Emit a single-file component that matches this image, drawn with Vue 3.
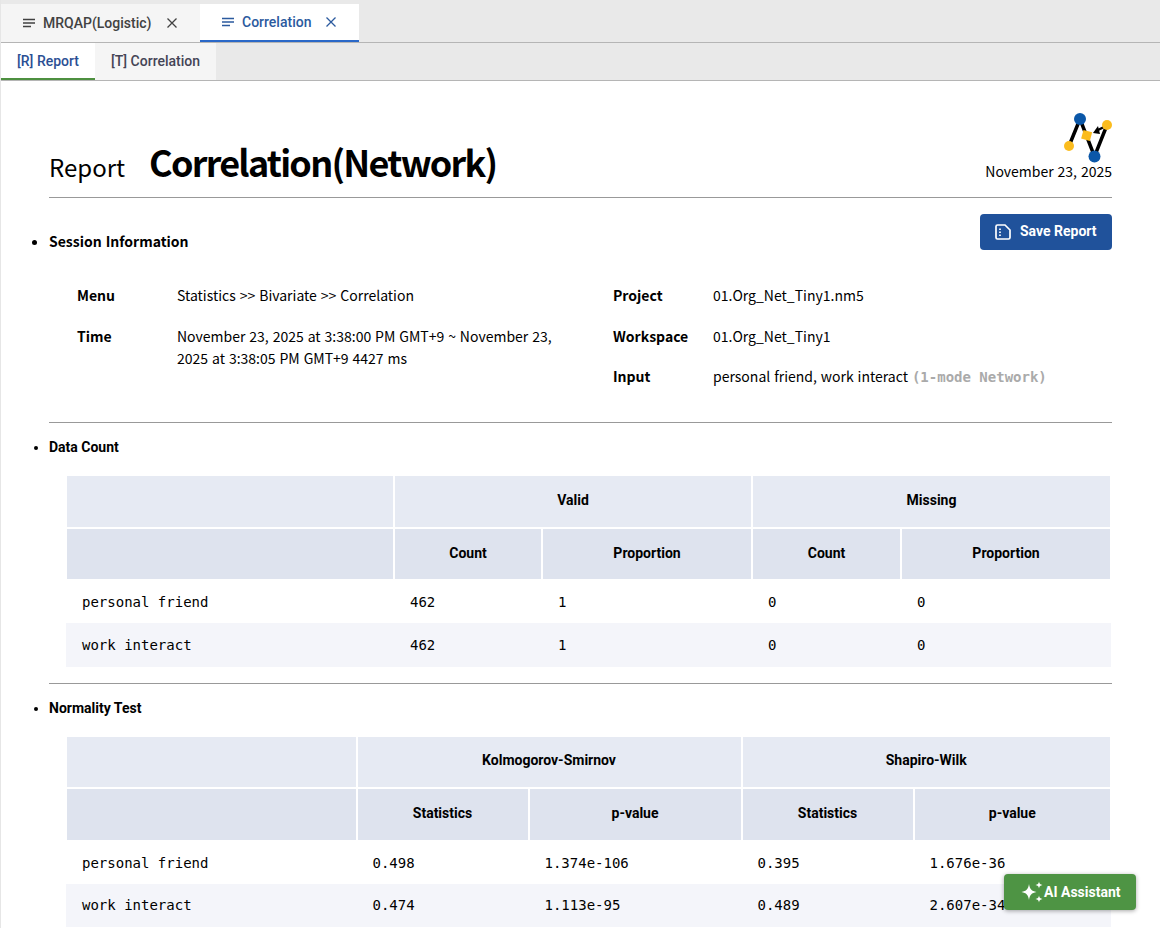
<script setup>
const countRows = [
  ['personal friend', '462', '1', '0', '0'],
  ['work interact', '462', '1', '0', '0']
]
const normalRows = [
  ['personal friend', '0.498', '1.374e-106', '0.395', '1.676e-36'],
  ['work interact', '0.474', '1.113e-95', '0.489', '2.607e-34']
]
</script>

<template>
  <div class="app">
    <div class="tabs">
      <div class="tab">
        <svg class="menu-icon" viewBox="0 0 14 10"><path d="M1 1.500h12M1 5h12M1 8.500h8" /></svg>
        <span>MRQAP(Logistic)</span>
        <svg class="close-icon first" viewBox="0 0 10 10"><path d="M0.500 0.500l9 9M9.500 0.500l-9 9" /></svg>
      </div>
      <div class="tab active">
        <svg class="menu-icon" viewBox="0 0 14 10"><path d="M1 1.500h12M1 5h12M1 8.500h8" /></svg>
        <span>Correlation</span>
        <svg class="close-icon" viewBox="0 0 10 10"><path d="M0.500 0.500l9 9M9.500 0.500l-9 9" /></svg>
      </div>
    </div>
    <div class="subtabs">
      <div class="subtab active">[R] Report</div>
      <div class="subtab">[T] Correlation</div>
    </div>

    <div class="report">
      <div class="report-head">
        <div class="title">
          <span class="title-small">Report</span>
          <span class="title-big">Correlation(Network)</span>
        </div>
        <div class="brand">
          <svg class="logo" width="50" height="52" viewBox="0 0 50 52">
            <path class="logo-line" d="M7 34L18 7L32.500 44.500L45 13" />
            <path class="logo-arrow" d="M44 14L34 19" />
            <path d="M31 21L36 14L38 22z" fill="#000" />
            <circle cx="7" cy="34" r="5" fill="#fbbc1e" />
            <circle cx="45" cy="13" r="5" fill="#fbbc1e" />
            <rect x="20" y="19" width="9" height="9" fill="#fbbc1e" transform="rotate(15 25 24)" />
            <circle cx="18" cy="7" r="6" fill="#0b57a8" />
            <circle cx="32.500" cy="44.500" r="6" fill="#0b57a8" />
          </svg>
          <div class="date">November 23, 2025</div>
        </div>
      </div>

      <section class="session">
        <div class="session-top">
          <ul><li class="heading-lg">Session Information</li></ul>
          <button class="save-btn">
            <svg width="18" height="18" viewBox="0 0 18 18"><path class="doc" d="M2 3.500a1.500 1.500 0 0 1 1.500-1.500h7.500l5 5v7.500a1.500 1.500 0 0 1-1.500 1.500h-11a1.500 1.500 0 0 1-1.500-1.500z" /><path d="M6 5.500v1.400M6 8.500v1.400M6 11.500v1.400" /></svg>
            <span>Save Report</span>
          </button>
        </div>
        <div class="info">
          <div class="info-col">
            <div class="info-row"><b>Menu</b><span>Statistics &gt;&gt; Bivariate &gt;&gt; Correlation</span></div>
            <div class="info-row"><b>Time</b><span>November 23, 2025 at 3:38:00 PM GMT+9 ~ November 23, 2025 at 3:38:05 PM GMT+9 4427 ms</span></div>
          </div>
          <div class="info-col right">
            <div class="info-row"><b>Project</b><span>01.Org_Net_Tiny1.nm5</span></div>
            <div class="info-row"><b>Workspace</b><span>01.Org_Net_Tiny1</span></div>
            <div class="info-row"><b>Input</b><span>personal friend, work interact <em>(1-mode Network)</em></span></div>
          </div>
        </div>
      </section>

      <section class="block count">
        <ul><li class="heading">Data Count</li></ul>
        <table>
          <colgroup><col style="width:328px" /><col style="width:148px" /><col style="width:210px" /><col style="width:149px" /><col /></colgroup>
          <thead>
            <tr class="head-1"><th></th><th colspan="2">Valid</th><th colspan="2">Missing</th></tr>
            <tr class="head-2"><th></th><th>Count</th><th>Proportion</th><th>Count</th><th>Proportion</th></tr>
          </thead>
          <tbody>
            <tr v-for="row in countRows" :key="row[0]">
              <td v-for="(cell, i) in row" :key="i">{{ cell }}</td>
            </tr>
          </tbody>
        </table>
      </section>

      <section class="block normal">
        <ul><li class="heading">Normality Test</li></ul>
        <table>
          <colgroup><col style="width:290.500px" /><col style="width:172px" /><col style="width:213px" /><col style="width:172px" /><col /></colgroup>
          <thead>
            <tr class="head-1"><th></th><th colspan="2">Kolmogorov-Smirnov</th><th colspan="2">Shapiro-Wilk</th></tr>
            <tr class="head-2"><th></th><th>Statistics</th><th>p-value</th><th>Statistics</th><th>p-value</th></tr>
          </thead>
          <tbody>
            <tr v-for="row in normalRows" :key="row[0]">
              <td v-for="(cell, i) in row" :key="i">{{ cell }}</td>
            </tr>
          </tbody>
        </table>
      </section>
    </div>

    <button class="ai-btn">
      <svg width="24" height="24" viewBox="0 0 24 24" fill="#fff">
        <path d="M9 4c.8 5.200 2.500 7 7.500 8-5 1-6.700 2.800-7.500 8-.8-5.200-2.500-7-7.500-8 5-1 6.700-2.800 7.500-8z" />
        <path d="M19 1.500c.4 2.400 1.200 3.100 3.500 3.500-2.300.4-3.100 1.100-3.500 3.500-.4-2.400-1.200-3.100-3.500-3.500 2.300-.4 3.100-1.100 3.500-3.500z" />
        <path d="M19 15.500c.4 2.400 1.200 3.100 3.500 3.500-2.300.4-3.100 1.100-3.500 3.500-.4-2.400-1.200-3.100-3.500-3.500 2.300-.4 3.100-1.100 3.500-3.500z" />
      </svg>
      <span>AI Assistant</span>
    </button>
  </div>
</template>

<style>
html, body { margin: 0; background: #fff; overflow: hidden; }
</style>

<style scoped>
.app {
  position: relative;
  height: 928px;
  overflow: hidden;
  box-sizing: border-box;
  border-left: 1px solid #e6e6e6;
  font-family: Roboto, sans-serif;
  color: #000;
  background: #fff;
}

.tabs {
  display: flex;
  height: 38px;
  padding-top: 4px;
  background: #e9e9e9;
  border-bottom: 1px solid #b5b5b5;
}
.tab {
  display: flex;
  align-items: center;
  width: 199px;
  box-sizing: border-box;
  padding-left: 21px;
  background: #f5f5f5;
  color: #424242;
  font-size: 14px;
  font-weight: 500;
}
.tab.active {
  width: 159px;
  background: #fff;
  color: #2b5a9e;
  border-bottom: 2px solid #2a68c8;
}
.menu-icon { width: 14px; height: 10px; margin-right: 7px; }
.menu-icon path { fill: none; stroke: currentColor; stroke-width: 1.3; }
.close-icon { width: 10px; height: 10px; margin-left: 15px; }
.close-icon.first { margin-left: 16px; }
.close-icon path { fill: none; stroke: currentColor; stroke-width: 1.3; }

.subtabs {
  display: flex;
  height: 37px;
  background: #e9e9e9;
  border-bottom: 1px solid #b5b5b5;
}
.subtab {
  display: flex;
  align-items: center;
  padding: 0 16px;
  background: #f5f5f5;
  color: #445;
  font-size: 14px;
  font-weight: 500;
  border-bottom: 2px solid transparent;
}
.subtab.active {
  width: 94px;
  box-sizing: border-box;
  background: #fff;
  color: #2b4f94;
  border-bottom-color: #4e9040;
}

.report {
  padding: 0 48px;
}
.report-head {
  display: flex;
  justify-content: space-between;
  align-items: flex-end;
  height: 117px;
  border-bottom: 1px solid #999;
  box-sizing: border-box;
  padding-bottom: 15px;
}
.title {
  display: flex;
  align-items: baseline;
  margin-bottom: -5px;
  font-family: "Noto Sans CJK KR", sans-serif;
}
.title-small { font-size: 24px; font-weight: 400; margin-right: 24px; }
.title-big { font-size: 36px; font-weight: 700; letter-spacing: -1.750px; }
.brand { display: flex; flex-direction: column; align-items: flex-end; }
.logo-line { fill: none; stroke: #000; stroke-width: 3.500; }
.logo-arrow { fill: none; stroke: #000; stroke-width: 2.500; }
.date {
  margin: -2px 0 2px;
  font-family: "Noto Sans CJK KR", sans-serif;
  font-size: 14px;
  line-height: 18px;
  word-spacing: 0.8px;
}

ul { margin: 0; padding: 0; list-style: disc; }
.heading-lg { font-family: "Noto Sans CJK KR", sans-serif; font-size: 14px; font-weight: 700; word-spacing: 0.8px; }
.heading { font-size: 14px; font-weight: 700; }

.session { border-bottom: 1px solid #999; height: 225px; box-sizing: border-box; }
.session-top { display: flex; justify-content: space-between; padding-top: 16px; align-items: flex-start; }
.session-top ul { padding-top: 17px; }
.save-btn {
  display: flex;
  align-items: center;
  gap: 8px;
  width: 132px;
  height: 36px;
  padding: 0 14px 2px;
  background: #20529b;
  color: #fff;
  border: 0;
  border-radius: 4px;
  font-family: Roboto, sans-serif;
  font-size: 14px;
  font-weight: 700;
  white-space: nowrap;
}
.save-btn svg { margin-top: 2px; fill: none; stroke: #fff; stroke-width: 1.700; }

.info {
  display: flex;
  padding: 33px 0 0 28px;
  font-family: "Noto Sans CJK KR", sans-serif;
  font-size: 14px;
  line-height: 22px;
  word-spacing: 0.8px;
}
.info-col { width: 536px; }
.info-col.right { flex: 1; }
.info-row { display: flex; margin-bottom: 18.500px; }
.info-row b { width: 100px; flex: none; font-weight: 700; }
.info-col:first-child .info-row span { width: 390px; }
.info-row em {
  font-style: normal;
  font-family: "DejaVu Sans Mono", monospace;
  font-size: 14px;
  font-weight: 700;
  color: #aaa;
  word-spacing: 0;
}

.block { padding-top: 16px; }
.count { height: 261px; box-sizing: border-box; border-bottom: 1px solid #999; }
.count ul { height: 35px; }
.normal ul { height: 35px; }
table {
  table-layout: fixed;
  width: 1047px;
  margin-left: 16px;
  border-collapse: collapse;
}
th {
  height: 53px;
  padding: 0 0 3px;
  box-sizing: border-box;
  border: 2px solid #fff;
  font-size: 14px;
  font-weight: 700;
  text-align: center;
}
.head-1 th { background: #e6eaf3; }
.head-2 th { height: 52px; background: #dee3ee; }
.normal .head-1 th { height: 52px; padding-bottom: 4px; }
.normal .head-2 th { height: 53px; }
td {
  height: 43px;
  box-sizing: border-box;
  padding: 0 16px 1px;
  font-family: "DejaVu Sans Mono", monospace;
  font-size: 14px;
}
tbody tr:nth-child(even) td { background: #f4f5fa; }
.count tbody tr:nth-child(even) td { height: 44px; }
.normal tbody tr:nth-child(even) td { padding-bottom: 2px; }

.ai-btn {
  position: absolute;
  right: 24px;
  bottom: 18px;
  display: flex;
  align-items: center;
  width: 132px;
  height: 36px;
  padding: 0 0 0 16px;
  background: #4e9444;
  color: #fff;
  border: 0;
  border-radius: 4px;
  box-shadow: 0 1px 4px rgba(0, 0, 0, 0.35);
  font-family: Roboto, sans-serif;
  font-size: 14px;
  font-weight: 700;
  white-space: nowrap;
}
.ai-btn span { margin-top: -1px; }
</style>
